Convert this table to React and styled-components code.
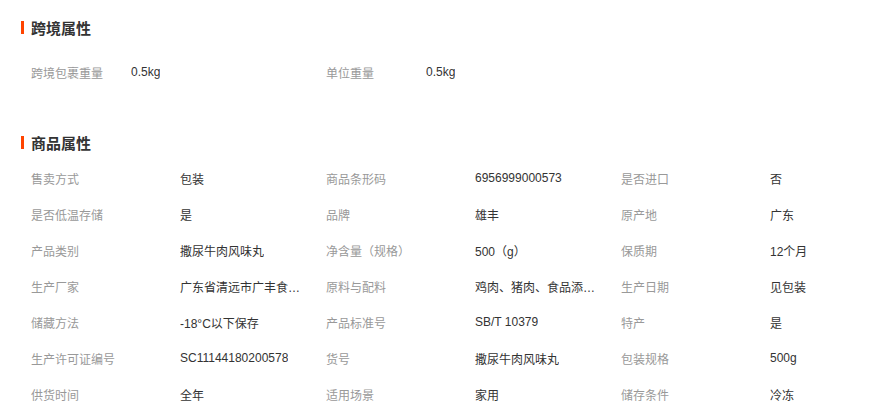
import React from 'react';
import styled, { createGlobalStyle } from 'styled-components';

const GlobalStyle = createGlobalStyle`
  body {
    margin: 0;
    background: #fff;
    font-family: "Liberation Sans", "Noto Sans CJK SC", sans-serif;
  }
`;

const Page = styled.div`
  width: 895px;
  height: 419px;
  overflow: hidden;
  padding: 17px 0 0 21px;
  box-sizing: border-box;
`;

const Section = styled.section`
  margin-bottom: ${({ $gap }) => $gap}px;
`;

const Title = styled.h3`
  margin: 0;
  display: flex;
  align-items: center;
  gap: 7px;
  height: 20px;
  font-size: 15px;
  font-weight: bold;
  color: #333;
  &::before {
    content: '';
    width: 3px;
    height: 13px;
    background: #ff4400;
  }
`;

const Grid = styled.div`
  display: grid;
  grid-template-columns: repeat(3, 295px);
  padding-left: 10px;
  margin-top: ${({ $top }) => $top}px;
`;

const Pair = styled.div`
  display: flex;
  align-items: center;
  height: 36px;
  font-size: 12px;
`;

const Label = styled.span`
  flex: 0 0 ${({ $w }) => $w}px;
  color: #999;
`;

const Value = styled.span`
  max-width: 126px;
  color: #333;
  white-space: nowrap;
  overflow: hidden;
  text-overflow: ellipsis;
`;

const cross = [
  ['跨境包裹重量', '0.5kg'],
  ['单位重量', '0.5kg'],
];

const goods = [
  ['售卖方式', '包装'],
  ['商品条形码', '6956999000573'],
  ['是否进口', '否'],
  ['是否低温存储', '是'],
  ['品牌', '雄丰'],
  ['原产地', '广东'],
  ['产品类别', '撒尿牛肉风味丸'],
  ['净含量（规格）', '500（g）'],
  ['保质期', '12个月'],
  ['生产厂家', '广东省清远市广丰食品有限公司'],
  ['原料与配料', '鸡肉、猪肉、食品添加剂'],
  ['生产日期', '见包装'],
  ['储藏方法', '-18°C以下保存'],
  ['产品标准号', 'SB/T 10379'],
  ['特产', '是'],
  ['生产许可证编号', 'SC11144180200578'],
  ['货号', '撒尿牛肉风味丸'],
  ['包装规格', '500g'],
  ['供货时间', '全年'],
  ['适用场景', '家用'],
  ['储存条件', '冷冻'],
];

const App = () => (
  <>
    <GlobalStyle />
    <Page>
      <Section $gap={42}>
        <Title>跨境属性</Title>
        <Grid $top={17}>
          {cross.map(([k, v]) => (
            <Pair key={k}>
              <Label $w={100}>{k}</Label>
              <Value>{v}</Value>
            </Pair>
          ))}
        </Grid>
      </Section>
      <Section $gap={0}>
        <Title>商品属性</Title>
        <Grid $top={8}>
          {goods.map(([k, v]) => (
            <Pair key={k}>
              <Label $w={149}>{k}</Label>
              <Value title={v}>{v}</Value>
            </Pair>
          ))}
        </Grid>
      </Section>
    </Page>
  </>
);

export default App;
